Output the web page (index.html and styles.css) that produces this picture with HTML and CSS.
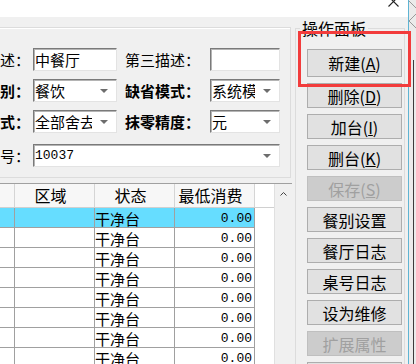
FILE: index.html
```html
<!DOCTYPE html>
<html lang="zh-CN">
<head>
    <meta charset="UTF-8">
    <title>餐厅桌台设置</title>
    <link rel="stylesheet" href="styles.css">
</head>
<body>
<div class="window">
    <div class="main">
        <div class="titlebar">
            <svg class="close" width="11" height="7" viewBox="0 0 11 7">
                <path d="M0.5 -3.5 L10.5 6.5 M10.5 -3.5 L0.5 6.5" stroke="#222" stroke-width="1.1" fill="none"/>
            </svg>
        </div>
        <div class="body">
            <div class="left">
                <div class="group">
                    <div class="row">
                        <span class="lbl">述：</span>
                        <div class="field w84"><span class="val">中餐厅</span></div>
                        <span class="lbl2">第三描述：</span>
                        <div class="field w70"><span class="val"></span></div>
                    </div>
                    <div class="row">
                        <span class="lbl b">别：</span>
                        <div class="field w84"><span class="val">餐饮</span><span class="arrow"></span></div>
                        <span class="lbl2 b">缺省模式：</span>
                        <div class="field w70"><span class="val">系统模式</span><span class="arrow"></span></div>
                    </div>
                    <div class="row">
                        <span class="lbl b">式：</span>
                        <div class="field w84"><span class="val">全部舍去</span><span class="arrow"></span></div>
                        <span class="lbl2 b">抹零精度：</span>
                        <div class="field w70"><span class="val">元</span><span class="arrow"></span></div>
                    </div>
                    <div class="row wide">
                        <span class="lbl">号：</span>
                        <div class="field w247"><span class="val num">10037</span><span class="arrow"></span></div>
                    </div>
                </div>

                <div class="grid">
                    <div class="cells">
                        <div class="h"></div><div class="h">区域</div><div class="h">状态</div><div class="h">最低消费</div><div class="h f"></div>

                        <div class="c on"></div><div class="c on"></div><div class="c on">干净台</div><div class="c on r num">0.00</div><div class="f"></div>
                        <div class="c"></div><div class="c"></div><div class="c">干净台</div><div class="c r num">0.00</div><div class="f"></div>
                        <div class="c"></div><div class="c"></div><div class="c">干净台</div><div class="c r num">0.00</div><div class="f"></div>
                        <div class="c"></div><div class="c"></div><div class="c">干净台</div><div class="c r num">0.00</div><div class="f"></div>
                        <div class="c"></div><div class="c"></div><div class="c">干净台</div><div class="c r num">0.00</div><div class="f"></div>
                        <div class="c"></div><div class="c"></div><div class="c">干净台</div><div class="c r num">0.00</div><div class="f"></div>
                        <div class="c"></div><div class="c"></div><div class="c">干净台</div><div class="c r num">0.00</div><div class="f"></div>
                        <div class="c"></div><div class="c"></div><div class="c">干净台</div><div class="c r num">0.00</div><div class="f"></div>
                    </div>
                    <div class="vscroll">
                        <svg width="7" height="4" viewBox="0 0 7 4"><path d="M0.5 3.5 L3.5 0.5 L6.5 3.5" stroke="#444" fill="none"/></svg>
                    </div>
                </div>
            </div>

            <fieldset class="panel">
                <legend>操作面板</legend>
                <button class="btn big">新建(<u>A</u>)</button>
                <button class="btn">删除(<u>D</u>)</button>
                <button class="btn">加台(<u>I</u>)</button>
                <button class="btn">删台(<u>K</u>)</button>
                <button class="btn" disabled>保存(<u>S</u>)</button>
                <button class="btn">餐别设置</button>
                <button class="btn">餐厅日志</button>
                <button class="btn">桌号日志</button>
                <button class="btn">设为维修</button>
                <button class="btn" disabled>扩展属性</button>
                <button class="btn"></button>
            </fieldset>
        </div>
    </div>

    <div class="edge">
        <svg width="7" height="30" viewBox="0 0 7 30">
            <path d="M0 1 L7 8 M7 14 L0 21 L7 28" stroke="#9a9a9a" fill="none"/>
        </svg>
        <div class="edge-line"></div>
    </div>

    <!-- markierung -->
    <div class="mark"></div>
</div>
</body>
</html>
```

FILE: styles.css
```css
* {
    box-sizing: border-box;
}
body {
    margin: 0;
    background: #f0f0f0;
    font-family: "Noto Sans CJK SC", sans-serif;
    font-size: 15px;
    color: #000;
    overflow: hidden;
}
.window {
    position: relative;
    display: flex;
    width: 416px;
    height: 364px;
    overflow: hidden;
}
.main {
    width: 408px;
}
.titlebar {
    height: 17px;
    background: #fff;
    display: flex;
    justify-content: flex-end;
}
.close {
    margin-right: 9px;
}
.body {
    display: flex;
}
.left {
    width: 292px;
}

/* obere Gruppe */
.group {
    margin: 10px 1px 0 -6px;
    border: 1px solid #dcdcdc;
    box-shadow: inset 1px 1px #fff;
    padding: 20px 0 10px;
}
.row {
    display: flex;
    align-items: center;
    height: 23px;
}
.row + .row {
    margin-top: 8px;
}
.row.wide {
    margin-top: 11px;
}
.lbl {
    width: 35px;
    margin-right: 3px;
    text-align: right;
    white-space: nowrap;
    line-height: 20px;
}
.lbl2 {
    width: 93px;
    padding-right: 10px;
    text-align: right;
    white-space: nowrap;
    line-height: 20px;
}
.b {
    font-weight: bold;
}
.field {
    height: 23px;
    background: #fff;
    border: 1px solid;
    border-color: #7a7a7a #e3e3e3 #e3e3e3 #7a7a7a;
    box-shadow: inset 1px 1px #b4b4b4;
    display: flex;
    align-items: center;
}
.w84 { width: 84px; }
.w70 { width: 70px; }
.w247 { width: 247px; }
.val {
    flex: 1;
    min-width: 0;
    padding-left: 1px;
    overflow: hidden;
    white-space: nowrap;
    line-height: 20px;
}
.arrow {
    width: 24px;
    flex: none;
    display: flex;
    justify-content: center;
}
.arrow::after {
    content: "";
    border: 4px solid transparent;
    border-top: 4px solid #6d6d6d;
    border-bottom: 0;
}
.num {
    font-family: "Liberation Mono", monospace;
    font-size: 13px;
}

/* Tabelle */
.grid {
    display: flex;
    margin-top: 5px;
    border-top: 1px solid #a0a0a0;
}
.cells {
    display: grid;
    grid-template-columns: 15px 80px 80px 80px 19px;
    grid-template-rows: 24px;
    grid-auto-rows: 20px;
}
.h {
    background: #f7f7f7;
    border-right: 1px solid #d5d5d5;
    border-bottom: 1px solid #d0d0d0;
    text-align: center;
    padding-right: 8px;
    font-size: 16px;
    line-height: 23px;
}
.h.f {
    border-right: 0;
}
.c {
    background: #fff;
    border-right: 1px solid #a0a0a0;
    border-bottom: 1px solid #a0a0a0;
    padding-top: 1px;
    line-height: 19px;
    white-space: nowrap;
    overflow: hidden;
}
.c.r {
    text-align: right;
    padding-right: 2px;
}
.c.on {
    background: #66ddff;
}
.f {
    background: #fff;
}
.vscroll {
    width: 18px;
    background: #f0f0f0;
    border-left: 1px solid #e0e0e0;
    display: flex;
    justify-content: center;
    align-items: flex-start;
    padding-top: 8px;
}

/* Bedienfeld */
.panel {
    margin: 3px 0 0 3px;
    width: 110px;
    height: 360px;
    border: 1px solid #dcdcdc;
    padding: 13px 2px 0 11px;
    min-width: 0;
}
.panel legend {
    padding: 0 2px;
    margin-left: -7px;
    font-size: 16px;
    line-height: 16px;
}
.btn {
    display: block;
    width: 95px;
    height: 25px;
    margin: 0 0 6px;
    padding: 0;
    background: #e1e1e1;
    border: 1px solid #adadad;
    font-family: inherit;
    font-size: 16px;
    line-height: 20px;
    color: #000;
}
.btn.big {
    height: 28px;
}
.btn:disabled {
    background: #cccccc;
    border-color: #bfbfbf;
    color: #a0a0a0;
}

.edge {
    width: 8px;
    background: #ebebeb;
    border-left: 1px solid #5fb4d3;
}
.edge svg {
    display: block;
}
.edge-line {
    margin: 30px 0 0 4px;
    width: 1px;
    height: 304px;
    background: #3c3c3c;
}
.mark {
    position: absolute;
    left: 298px;
    top: 31px;
    width: 113px;
    height: 56px;
    border: 3px solid #f23c3c;
}
```
